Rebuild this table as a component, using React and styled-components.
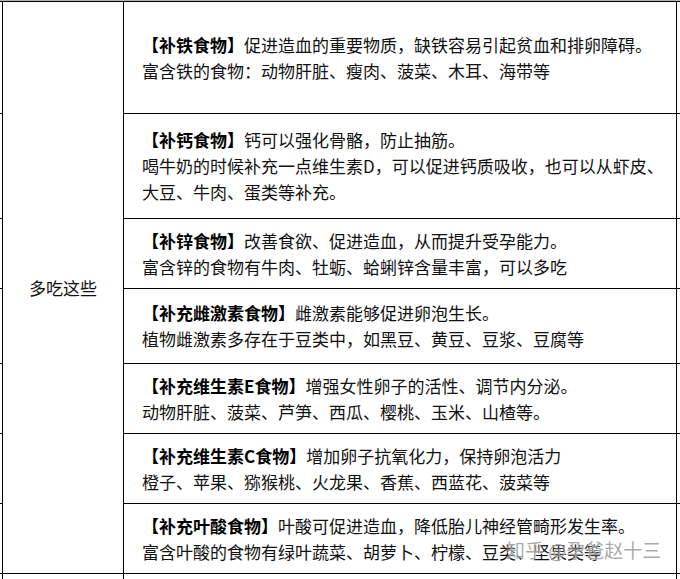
import { Fragment } from 'react';
import styled, { createGlobalStyle } from 'styled-components';

const GlobalStyle = createGlobalStyle`
    html, body {
        margin: 0;
        padding: 0;
        background: #fff;
    }
    body {
        font-family: "Noto Sans CJK SC", "Noto Sans", sans-serif;
    }
`;

const Page = styled.div`
    position: relative;
    width: 680px;
    height: 579px;
    overflow: hidden;
    background: #fff;
`;

const Table = styled.div`
    display: grid;
    grid-template-columns: 2px 120px 552px 3px;
    grid-template-rows: 111px 104px 69px 74px 69px 69px 69px 1fr;
    gap: 1px;
    height: 100%;
    box-sizing: border-box;
    padding-top: 1px;
    border-top: 1px solid #b5b5b5;
    background: #000;
`;

const Cell = styled.div`
    background: #fff;
    min-width: 0;
    overflow: hidden;
`;

const SideCell = styled(Cell)`
    grid-row: 1 / 8;
    grid-column: 2;
    display: flex;
    align-items: center;
    justify-content: center;
    font-size: 17px;
    color: #111;
`;

const TextCell = styled(Cell)`
    display: flex;
    flex-direction: column;
    justify-content: center;
    padding-left: 18px;
    font-size: 17px;
    line-height: 26px;
    color: #111;
`;

const Line = styled.div`
    white-space: nowrap;
`;

const Title = styled.b`
    font-weight: 700;
    color: #000;
`;

const Watermark = styled.div`
    position: absolute;
    left: 506px;
    top: 537px;
    font-size: 19px;
    line-height: 26px;
    white-space: nowrap;
    color: rgba(140, 140, 140, 0.75);
    text-shadow: 0 0 2px rgba(255, 255, 255, 0.9);
    pointer-events: none;
`;

const rows = [
    {
        title: '【补铁食物】',
        lines: ['促进造血的重要物质，缺铁容易引起贫血和排卵障碍。', '富含铁的食物：动物肝脏、瘦肉、菠菜、木耳、海带等'],
    },
    {
        title: '【补钙食物】',
        lines: [
            '钙可以强化骨骼，防止抽筋。',
            '喝牛奶的时候补充一点维生素D，可以促进钙质吸收，也可以从虾皮、',
            '大豆、牛肉、蛋类等补充。',
        ],
    },
    {
        title: '【补锌食物】',
        lines: ['改善食欲、促进造血，从而提升受孕能力。', '富含锌的食物有牛肉、牡蛎、蛤蜊锌含量丰富，可以多吃'],
    },
    {
        title: '【补充雌激素食物】',
        lines: ['雌激素能够促进卵泡生长。', '植物雌激素多存在于豆类中，如黑豆、黄豆、豆浆、豆腐等'],
    },
    {
        title: '【补充维生素E食物】',
        lines: ['增强女性卵子的活性、调节内分泌。', '动物肝脏、菠菜、芦笋、西瓜、樱桃、玉米、山楂等。'],
    },
    {
        title: '【补充维生素C食物】',
        lines: ['增加卵子抗氧化力，保持卵泡活力', '橙子、苹果、猕猴桃、火龙果、香蕉、西蓝花、菠菜等'],
    },
    {
        title: '【补充叶酸食物】',
        lines: ['叶酸可促进造血，降低胎儿神经管畸形发生率。', '富含叶酸的食物有绿叶蔬菜、胡萝卜、柠檬、豆类、坚果类等'],
    },
];

function App() {
    return (
        <Page>
            <GlobalStyle />
            <Table>
                {rows.map((row, i) => (
                    <Fragment key={i}>
                        <Cell style={{ gridRow: i + 1, gridColumn: 1 }} />
                        {i === 0 && <SideCell>多吃这些</SideCell>}
                        <TextCell style={{ gridRow: i + 1, gridColumn: 3 }}>
                            {row.lines.map((line, j) => (
                                <Line key={j}>
                                    {j === 0 && <Title>{row.title}</Title>}
                                    {line}
                                </Line>
                            ))}
                        </TextCell>
                        <Cell style={{ gridRow: i + 1, gridColumn: 4 }} />
                    </Fragment>
                ))}
                <Cell />
                <Cell />
                <Cell />
                <Cell />
            </Table>
            <Watermark>知乎 @孕爸赵十三</Watermark>
        </Page>
    );
}

export default App;
